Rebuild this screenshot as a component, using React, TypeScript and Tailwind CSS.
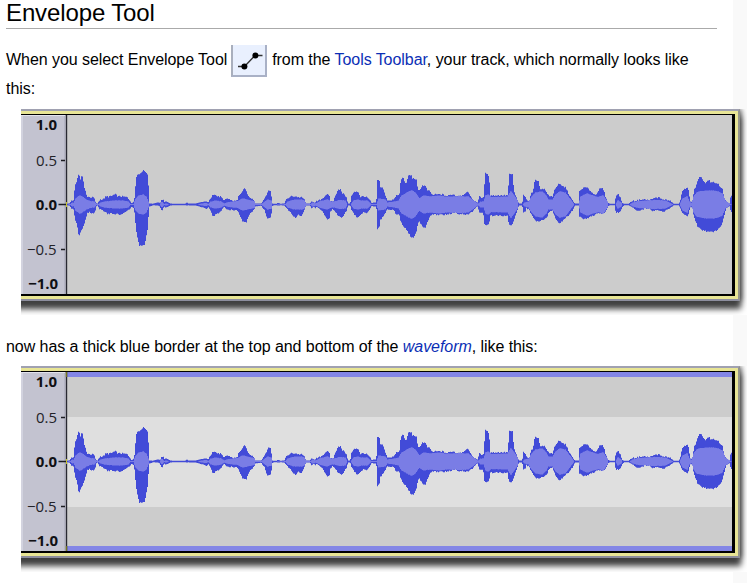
import React from "react";

// Each entry: x, peak above the axis, peak below the axis.
const PEAKS: number[] = [
  67,.7,.7, 70,1,1, 71,2,2, 72,4,4, 74,3,3, 75,12,10, 76,20,15, 78,24,20, 78.5,29,28, 79.5,29,30, 80.3,18,25, 81.5,28,25, 82.3,28,24,
  83.3,17,20, 84.7,14,15, 85.5,10,13, 86.7,8,8, 89.3,7,7, 93.3,7,9, 94.7,3,6, 96,1,1, 98.7,1,1, 99.3,3,3, 101.3,5,5, 104,5,6, 106.7,8,7,
  108,7,9, 110,8,9, 112,8,8, 115,10,10, 117,8,9, 120,8,10, 122,8,9, 126.7,7,6, 129.3,4,5, 130.7,1,2, 134,2,3, 135.3,7,8, 136.3,20,20,
  137.3,29,28, 138.7,30,36, 140,30,41, 142.7,33,41, 144,34,40, 145.3,32,34, 147.3,29,22, 148,15,8, 148.7,1,2, 153,.7,.7, 158.3,2,1,
  161,1,2, 161.7,5,6, 163,4,3, 164,2,1, 166,3,3, 170,1,1, 172,.7,.7, 186,.7,.7, 187,2,1, 188,.7,.7, 191,1,1, 196.7,1,1, 200,2,2, 206,3,4,
  208.7,1,2, 210,5,4, 212,7,8, 213,10,11, 215.3,9,10, 218,7,8, 220,8,7, 222.7,4,3, 224.7,3,2, 226.7,6,4, 229,5,5, 233.3,3,5, 238,4,6,
  239.3,9,8, 241.7,10,13, 243.3,13,17, 244,16,16, 245.7,14,18, 246.7,10,15, 249.3,7,9, 252.7,5,6, 254.7,1,2, 262,1,1, 263.3,3,4, 265,6,5,
  267.3,9,12, 268.7,14,14, 270.5,13,12, 271.3,1,2, 273,.7,.7, 277,.7,.7, 278.3,1.5,1, 280,.7,.7, 285,1,1, 287.3,5,4, 291.7,8,8, 293.3,8,10,
  295.3,8,13, 298.3,7,9, 300.7,7,11, 304,5,5, 305.3,1,1, 310.7,1,1, 312,3,3, 315,1,3, 317,3,2, 320,4,4, 323.3,6,7, 327.3,10,14, 328.7,8,15,
  330,3,6, 334,3,4, 336.7,10,8, 338,13,10, 338.5,15,12, 340,15,10, 341.3,11,13, 344,10,9, 346,6,6, 347.3,1,1, 351,1,1, 352,8,5, 354.7,12,9,
  357.3,13,13, 360,7,10, 363.3,8,7, 366.7,7,8, 370,3,3, 371.3,1,1, 374.7,2,2, 377,1,1, 377.7,15,14, 378.2,24,24, 379,24,22, 379.7,12,11,
  381,17,16, 382,17,12, 384,11,10, 385.7,6,6, 387,4,4, 390,4,5, 395,5,6, 396.7,9,10, 400,9,10, 401.3,22,16, 402.7,27,20, 404.7,21,22,
  407.3,21,25, 409,29,28, 410.7,29,31, 412.7,24,33, 414,26,31, 416,24,27, 417.3,13,18, 420,14,17, 423.3,19,22, 425,18,23, 426.7,14,18,
  429.3,13,11, 432.7,8,10, 435,10,10, 441.7,10,10, 446.7,8,10, 453.3,10,8, 456,8,8, 460,9,10, 463,9,9, 466.7,12,10, 469.3,10,9, 471.7,5,7,
  475,3,3, 478.3,1,1, 480,8,8, 482.7,5,8, 484,4,9, 485.3,22,20, 486,31,20, 487.3,31,20, 488.5,26,19, 489.7,9,11, 508.3,9,11, 509.3,20,18,
  510,30,20, 512,30,20, 513.3,13,16, 516,6,7, 518.3,1,1, 523,1,1, 524,10,9, 526,4,3, 530,4,5, 531.7,11,9, 534,13,13, 534.7,20,14, 535.5,24,16,
  538,24,17, 539.3,14,16, 543.3,16,15, 546.7,11,12, 548.3,8,7, 553.3,8,6, 555,14,11, 557.3,18,16, 559.3,20,18, 561.7,18,17, 565,17,13,
  568.3,10,11, 571.7,4,6, 574.3,1,1, 579.4,1,1, 580,13,12, 583.3,16,14, 586,17,14, 589.3,14,12, 593.3,10,11, 596.7,10,8, 600,15,9, 602.3,16,9,
  604,11,8, 605.3,6,7, 608,1,1, 610,.7,.7, 616,.7,.7, 616.3,9,8, 618,10,8, 620,6,7, 622,1,2, 624,.7,.7, 629.3,.7,.7, 631.7,3,2, 638.3,4,6,
  641.7,5,5, 642.5,3,5, 643.5,5,4, 650,4,4, 653.3,6,6, 655,5,5, 656,7,5, 657,5,6, 659.3,7,6, 661,5,5, 663.3,5,7, 668.3,4,4, 671.7,2,2,
  673.3,.7,.7, 679.3,.7,.7, 681,3,3, 682.7,12,8, 684.7,16,10, 687.5,16,11, 688.7,8,6, 690,2,2, 693.3,3,4, 694.7,14,13, 696.7,18,17,
  698.3,23,22, 700.3,27,24, 702.7,24,26, 705,20,26, 708.7,24,27, 710.7,20,27, 712.7,22,27, 714,22,26, 715.3,20,26, 717.3,21,25, 719.3,18,23,
  722,15,18, 723.3,6,12, 725.3,4,4, 728.3,1,2, 731,1,1, 731.3,9,7, 732,9,7,
];

// Each entry: x, average level on either side of the axis.
const LEVELS: number[] = [
  67,0, 71,.5, 72.5,2, 74,1, 76,6, 80,9, 82,8, 86,5, 90,3.5, 94,3, 96,.4, 99,.4, 101,2, 105,3, 115,4, 122,4, 128,3, 130,.4, 134,.5, 136,6,
  139,9, 143,10, 146,8, 148,3, 149,0, 160,0, 162,2.5, 164,0, 166,1, 169,0, 198,0, 202,1, 206,1.5, 209,.4, 211,3, 216,4, 221,3, 224,1,
  229,2.5, 234,3, 238,3.5, 243,6, 247,5, 254,3.5, 255,.4, 262,.4, 264,2, 268,5, 271,4, 272,0, 286,.4, 288,3, 295,5, 301,5, 304,4, 306,.4,
  311,.4, 313,2, 316,1, 321,3.5, 327,5, 331,3, 335,3, 339,4.5, 345,4, 347,0, 351,0, 354,4, 358,5, 361,4, 367,4, 371,.4, 377,.4, 379,6,
  385,5, 387,2, 395,3, 399,4, 402,9, 406,11, 409,13, 412,14, 415,12, 419,6, 424,9, 429,8, 435,8.5, 440,9, 445,8, 452,8, 460,8.5, 468,8,
  472,5, 476,2, 478,.4, 481,3, 484,3, 486,9, 488,10, 491,7.5, 508,8, 511,13, 514,9, 517,4, 518,0, 523,0, 525,2, 529,3, 532,8, 536,12,
  542,13, 546,9, 548,5, 553,5, 556,10, 560,13, 565,12, 571,4, 574,0, 579,0, 581,8, 587,11, 593,9, 598,7.5, 603,9, 607,3, 608,0, 616,0,
  618,4, 621,2, 622,0, 630,0, 633,2, 639,3.5, 655,4.5, 665,4, 671,1, 673,0, 680,0, 683,6, 687,8, 689,3, 692,1, 694,8, 697,12, 700,13,
  707,14, 713,14, 718,13, 722,11, 725,4, 730,.4, 732,0,
];

const AXIS = 204.5;

function sample(data: number[], stride: number, field: number, x: number): number {
  for (let i = 0; i + stride < data.length; i += stride) {
    const x0 = data[i];
    const x1 = data[i + stride];
    if (x <= x1) {
      const t = Math.max(0, (x - x0) / (x1 - x0));
      return data[i + field] + (data[i + stride + field] - data[i + field]) * t;
    }
  }
  return data[data.length - stride + field];
}

// The loudest value that falls in or next to a pixel column.
function loudest(data: number[], stride: number, field: number, x: number, reach: number): number {
  return Math.max(
    sample(data, stride, field, x + 0.5 - reach),
    sample(data, stride, field, x + 0.5),
    sample(data, stride, field, x + 0.5 + reach),
  );
}

// Small roughness on the louder columns, the same on every render.
function rough(x: number, seed: number, level: number): number {
  if (level < 3) return 0;
  const v = Math.sin(x * 12.9898 + seed * 78.233) * 43758.5453;
  return (v - Math.floor(v) - 0.4) * 2;
}

function outline(data: number[], stride: number, roughness: number, floor: number, reach: number): string {
  const top: string[] = [];
  const bottom: string[] = [];
  for (let x = 67; x < 732; x++) {
    const a = loudest(data, stride, 1, x, reach);
    const b = loudest(data, stride, stride - 1, x, reach);
    const up = AXIS - Math.max(floor, a + rough(x, 1, a) * roughness);
    const down = AXIS + Math.max(floor, b + rough(x, 2, b) * roughness);
    top.push(`${x},${up.toFixed(1)} ${x + 1},${up.toFixed(1)}`);
    bottom.unshift(`${x + 1},${down.toFixed(1)} ${x},${down.toFixed(1)}`);
  }
  return top.concat(bottom).join(" ");
}

const PEAK_OUTLINE = outline(PEAKS, 3, 0.7, 0.8, 0.7);
const LEVEL_OUTLINE = outline(LEVELS, 2, 0.2, 0, 0.5);

const TICKS = [
  { label: "1.0", x: 57, y: 130, bold: true },
  { label: "0.5", x: 57, y: 166, bold: false },
  { label: "0.0", x: 57, y: 210, bold: true },
  { label: "−0.5", x: 56.5, y: 255, bold: false },
  { label: "−1.0", x: 58, y: 289, bold: true },
];

function Plot({ envelope }: { envelope: boolean }) {
  return (
    <svg viewBox="21 115 711 179" className="block h-[179px] w-[711px]">
      <rect x="21" y="115" width="45" height="179" fill="#c3c3d0" />
      <path d="M21 115.5H65M22 115V294" stroke="#e2e3ee" fill="none" />
      <path d="M64.5 116V294" stroke="#b4b4c4" />
      <rect x="67" y="115" width="665" height="179" fill="#cccccc" />
      {envelope && (
        <>
          <rect x="67" y="160" width="665" height="90" fill="#dfdfdf" />
          <rect x="67" y="115" width="665" height="5" fill="#8386e6" />
          <rect x="67" y="289" width="665" height="5" fill="#8386e6" />
        </>
      )}
      <path d="M66.5 115V294" stroke="#292932" strokeWidth="1.4" />
      {envelope && <path d="M66.5 115V120M66.5 289V294" stroke="#77771e" strokeWidth="1.4" />}
      <path d="M61 160.5H65M58.5 204.5H66M61 249.5H65" stroke="#1c1c22" strokeWidth="1.4" />
      {TICKS.map((t) => (
        <text
          key={t.label}
          x={t.x}
          y={t.y}
          textAnchor="end"
          fill={t.bold ? "#101014" : "#222228"}
          className={
            t.bold
              ? "font-['Open_Sans',sans-serif] text-[15px] font-bold"
              : "font-['Open_Sans',sans-serif] text-[15px] font-medium"
          }
        >
          {t.label}
        </text>
      ))}
      <polygon points={PEAK_OUTLINE} fill="#424bd8" />
      <polygon points={LEVEL_OUTLINE} fill="#7a7de5" />
      <path d="M66.5 202V207" stroke="#c6c42a" />
    </svg>
  );
}

function Track({ envelope = false }: { envelope?: boolean }) {
  return (
    <div className="ml-[15px] h-[206px] w-[726px] overflow-hidden bg-white">
      <div className="-ml-4 w-[735px] border-t-2 border-r-2 border-b-2 border-t-[#a0a1b1] border-r-[#94948c] border-b-[#8d8e9e] shadow-[1px_8px_6px_#404040,1px_0px_6px_#444444]">
        <div className="border-t-[3px] border-r-[3px] border-b-[3px] border-[#e8e595]">
          <div className="border-t border-r-[3px] border-b-2 border-black pl-4">
            <Plot envelope={envelope} />
          </div>
        </div>
      </div>
    </div>
  );
}

function EnvelopeIcon() {
  return (
    <span className="mr-[5px] ml-1 inline-flex h-8 w-9 items-center justify-center border-r-2 border-b-2 border-l-2 border-r-[#a9b1c6] border-b-[#a9b1c6] border-l-[#a9afbd] bg-[#e9f0fe] align-middle">
      <svg viewBox="0 0 32 30" className="h-[30px] w-8">
        <path d="M5 21.5H11.5L22 10.5H29.5" fill="none" stroke="#333" strokeWidth="1.3" />
        <circle cx="11.4" cy="21.5" r="3" fill="#000" />
        <circle cx="22.4" cy="10.5" r="3" fill="#000" />
      </svg>
    </span>
  );
}

export default function App() {
  return (
    <div className="flex h-[583px] w-[747px] overflow-hidden bg-[#f9f9f9] font-['Liberation_Sans',Arial,sans-serif] text-base tracking-[-0.06px] text-black">
      <main className="w-[733px] shrink-0 bg-white pl-1.5">
        <h2 className="h-[29px] w-[711px] border-b border-[#aaaaaa] text-[24px] leading-[26px] tracking-[-0.12px]">
          Envelope Tool
        </h2>
        <p className="h-[80px] pt-4 leading-[28px] whitespace-nowrap">
          <span className="flex h-8 items-center">
            <span className="pb-0.5 leading-[28px]">When you select Envelope Tool</span>
            <EnvelopeIcon />
            <span className="pb-0.5 leading-[28px]">
              from the <a className="text-[#0b2fb5]">Tools Toolbar</a>, your track, which normally looks like
            </span>
          </span>
          <span className="block leading-6">this:</span>
        </p>
        <Track />
        <p className="h-[51px] pt-[21px] leading-[22px]">
          now has a thick blue border at the top and bottom of the{" "}
          <a className="text-[#0b2fb5] italic">waveform</a>, like this:
        </p>
        <Track envelope />
      </main>
    </div>
  );
}
